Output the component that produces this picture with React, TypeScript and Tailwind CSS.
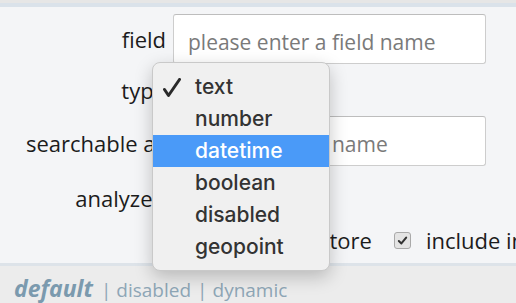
import React from "react";

const typeOptions = ["text", "number", "datetime", "boolean", "disabled", "geopoint"];

function CheckBox() {
  return (
    <span className="flex h-[17px] w-[17px] items-center justify-center rounded-[3px] border border-[#a9a9a9] bg-[#e4e4e4]">
      <svg viewBox="0 0 12 12" className="h-[11px] w-[11px]">
        <path d="M2 6.5 L4.8 9.2 L10 2.8" fill="none" stroke="#333" strokeWidth="2.2" strokeLinecap="round" strokeLinejoin="round" />
      </svg>
    </span>
  );
}

function TypeMenu() {
  return (
    <div className="absolute left-[152px] top-[62px] w-[178px] rounded-[8px] border border-[#c9c9c9] bg-[#f0f0f0] pt-[8px] pb-[7px] shadow-[0_6px_18px_rgba(0,0,0,0.22)] font-['Inter',sans-serif] text-[21px] font-medium text-[#333]">
      {typeOptions.map((opt, i) => (
        <div
          key={opt}
          className={`relative flex h-[32px] items-center pl-[42px] ${
            opt === "datetime" ? "bg-[#4a9af8] text-white" : ""
          }`}
        >
          {i === 0 ? (
            <svg viewBox="0 0 18 20" className="absolute left-[10px] top-[7px] h-[20px] w-[18px]">
              <path d="M1.5 11.5 L5.5 17.5 L16.5 1.5" fill="none" stroke="#2a2a2a" strokeWidth="3" strokeLinecap="round" strokeLinejoin="round" />
            </svg>
          ) : null}
          {opt}
        </div>
      ))}
    </div>
  );
}

export default function App() {
  const inputCls =
    "h-[50px] w-[313px] rounded-[3px] border border-[#cdcdcd] border-t-[#bdbdbd] bg-white pl-[14px] pt-[5px] text-[21px] text-[#333] placeholder:text-[#7a7a7a] outline-none font-['Open_Sans',sans-serif]";
  return (
    <div className="relative h-[303px] w-[516px] overflow-hidden bg-[#f4f5f7] font-['Open_Sans',sans-serif] text-[22px] text-[#1c1c1c]">
      <div className="h-[3px] bg-[#e6e6e6]" />
      <div className="h-[4px] bg-[#dae2ea]" />
      <div className="pt-[7px]">
        <div className="grid h-[50px] grid-cols-[166px_313px] items-center gap-x-[7px]">
          <span className="text-right">field</span>
          <input className={inputCls} placeholder="please enter a field name" />
        </div>
        <div className="grid h-[52px] grid-cols-[166px_313px] items-center gap-x-[7px]">
          <span className="text-right">type</span>
          <div />
        </div>
        <div className="grid h-[50px] grid-cols-[166px_313px] items-center gap-x-[7px]">
          <span className="pt-[5px] text-right whitespace-nowrap">searchable as</span>
          <input className={inputCls} placeholder="please enter a name" />
        </div>
        <div className="grid h-[58px] grid-cols-[166px_313px] items-center gap-x-[7px]">
          <span className="pt-[6px] text-right">analyzed</span>
          <div />
        </div>
        <div className="flex h-[32px] items-center whitespace-nowrap pl-[294px]">
          <CheckBox />
          <span className="ml-[12px]">store</span>
          <span className="ml-[22px]">
            <CheckBox />
          </span>
          <span className="ml-[15px]">include in all</span>
        </div>
      </div>
      <div className="mt-[7px] h-[40px] border-t-[3px] border-[#dde3e9] bg-[#ececec] pl-[14px] pt-[7px] leading-[30px] whitespace-nowrap">
        <span className="text-[23px] font-bold italic text-[#7b9aae]">default</span>
        <span className="ml-[8px] text-[19px] text-[#8ea6b6]">|</span>
        <span className="ml-[5px] text-[19px] text-[#8ea6b6]">disabled</span>
        <span className="ml-[6px] text-[19px] text-[#8ea6b6]">|</span>
        <span className="ml-[5px] text-[19px] text-[#8ea6b6]">dynamic</span>
      </div>
      <TypeMenu />
    </div>
  );
}
